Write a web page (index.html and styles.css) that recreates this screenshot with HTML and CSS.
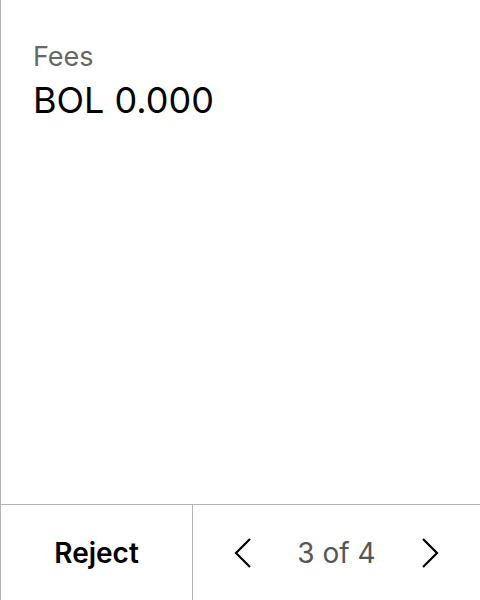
FILE: index.html
```html
<!DOCTYPE html>
<html>
<head>
<meta charset="utf-8">
<link rel="stylesheet" href="styles.css">
</head>
<body>
<div class="screen">
  <div class="content">
    <div class="label">Fees</div>
    <div class="value">BOL 0.000</div>
  </div>
  <div class="footer">
    <div class="reject">Reject</div>
    <div class="pager">
      <svg class="chev" width="18" height="32" viewBox="0 0 18 32"><path d="M16 2 L2 16 L16 30" fill="none" stroke="#000" stroke-width="2.2"/></svg>
      <span class="count">3 of 4</span>
      <svg class="chev" width="18" height="32" viewBox="0 0 18 32"><path d="M2 2 L16 16 L2 30" fill="none" stroke="#000" stroke-width="2.2"/></svg>
    </div>
  </div>
</div>
</body>
</html>
```
FILE: styles.css
```css
html, body { margin: 0; padding: 0; background: #fff; }
body { font-family: Inter, "Noto Sans", sans-serif; }
.screen {
  width: 480px;
  height: 600px;
  box-sizing: border-box;
  border-left: 1px solid #b3b3b3;
  display: flex;
  flex-direction: column;
}
.content {
  flex: 1;
  padding: 41px 0 0 32px;
}
.label {
  font-size: 27px;
  line-height: 32px;
  color: #666;
}
.value {
  font-size: 36px;
  line-height: 44px;
  color: #000;
  margin-top: 5px;
}
.footer {
  height: 96px;
  box-sizing: border-box;
  border-top: 1px solid #b3b3b3;
  display: grid;
  grid-template-columns: 192px 1fr;
}
.reject {
  display: flex;
  align-items: center;
  justify-content: center;
  font-size: 28px;
  font-weight: 600;
  color: #000;
  border-right: 1px solid #b3b3b3;
}
.pager {
  display: flex;
  align-items: center;
  justify-content: space-between;
  padding: 0 41px 0 41px;
}
.count {
  font-size: 28px;
  color: #555;
}
.chev { display: block; }
```
